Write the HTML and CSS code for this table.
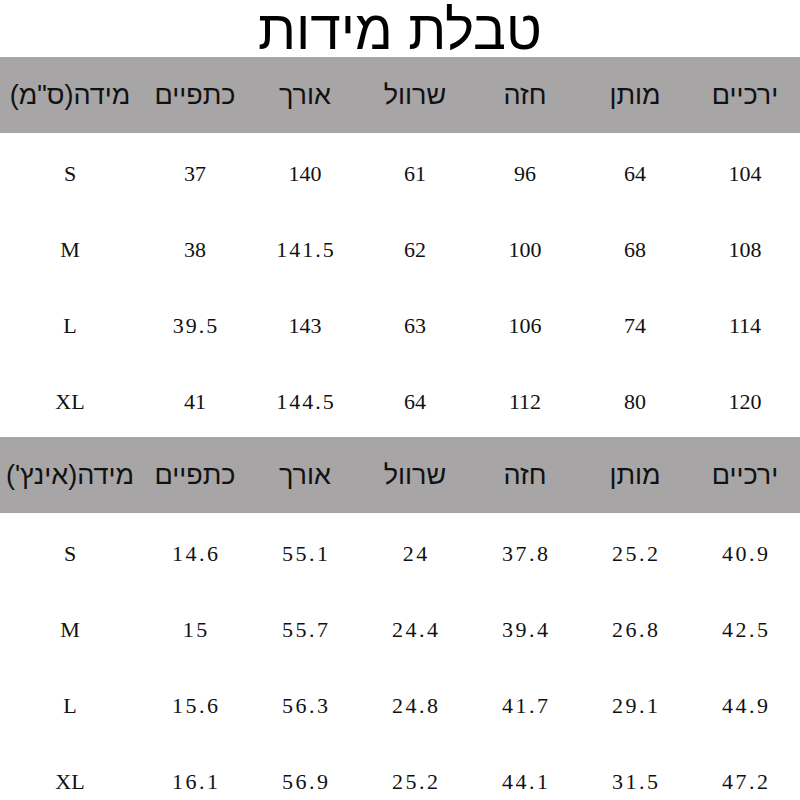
FILE: index.html
```html
<!DOCTYPE html>
<html lang="he" dir="rtl">
<head>
<meta charset="utf-8">
<link rel="stylesheet" href="styles.css">
</head>
<body>
<div class="page">
  <h1 class="title">טבלת מידות</h1>
  <div class="table">
    <div class="row head">
      <div>ירכיים</div><div>מותן</div><div>חזה</div><div>שרוול</div><div>אורך</div><div>כתפיים</div><div>מידה(ס"מ)</div>
    </div>
    <div class="row"><div>104</div><div>64</div><div>96</div><div>61</div><div>140</div><div>37</div><div class="size">S</div></div>
    <div class="row"><div>108</div><div>68</div><div>100</div><div>62</div><div class="wide">141.5</div><div>38</div><div class="size">M</div></div>
    <div class="row"><div>114</div><div>74</div><div>106</div><div>63</div><div>143</div><div class="wide">39.5</div><div class="size">L</div></div>
    <div class="row"><div>120</div><div>80</div><div>112</div><div>64</div><div class="wide">144.5</div><div>41</div><div class="size">XL</div></div>
    <div class="row head">
      <div>ירכיים</div><div>מותן</div><div>חזה</div><div>שרוול</div><div>אורך</div><div>כתפיים</div><div>מידה(אינץ')</div>
    </div>
    <div class="row mono"><div>40.9</div><div>25.2</div><div>37.8</div><div>24</div><div>55.1</div><div>14.6</div><div class="size">S</div></div>
    <div class="row mono"><div>42.5</div><div>26.8</div><div>39.4</div><div>24.4</div><div>55.7</div><div>15</div><div class="size">M</div></div>
    <div class="row mono"><div>44.9</div><div>29.1</div><div>41.7</div><div>24.8</div><div>56.3</div><div>15.6</div><div class="size">L</div></div>
    <div class="row mono"><div>47.2</div><div>31.5</div><div>44.1</div><div>25.2</div><div>56.9</div><div>16.1</div><div class="size">XL</div></div>
  </div>
</div>
</body>
</html>
```
FILE: styles.css
```css
html, body {
  margin: 0;
  padding: 0;
  background: #ffffff;
}
.page {
  width: 800px;
  height: 800px;
  overflow: hidden;
  color: #111111;
}
.title {
  margin: 0;
  height: 57px;
  font-family: "Liberation Sans", Arial, sans-serif;
  font-weight: normal;
  font-size: 55px;
  line-height: 60px;
  text-align: center;
  color: #000;
}
.table {
  display: flex;
  flex-direction: column;
}
.row {
  display: grid;
  grid-template-columns: 110px 110px 110px 110px 110px 110px 140px;
  height: 76px;
  box-sizing: border-box;
  padding-top: 6px;
  align-items: center;
  font-family: "Liberation Serif", "Times New Roman", serif;
  font-size: 22px;
  text-align: center;
  direction: rtl;
}
.row > div {
  direction: ltr;
  unicode-bidi: plaintext;
}
.row .wide {
  letter-spacing: 2px;
  padding-left: 2px;
}
.row.head {
  background: #a7a5a6;
  padding-top: 0;
  font-family: "Liberation Sans", Arial, sans-serif;
  font-size: 27px;
  color: #111;
}
.row.head > div {
  direction: rtl;
  white-space: nowrap;
}
.row.mono > div {
  letter-spacing: 2.5px;
  padding-left: 2.5px;
}
.row.mono > .size {
  letter-spacing: 0;
  padding-left: 0;
}
```
